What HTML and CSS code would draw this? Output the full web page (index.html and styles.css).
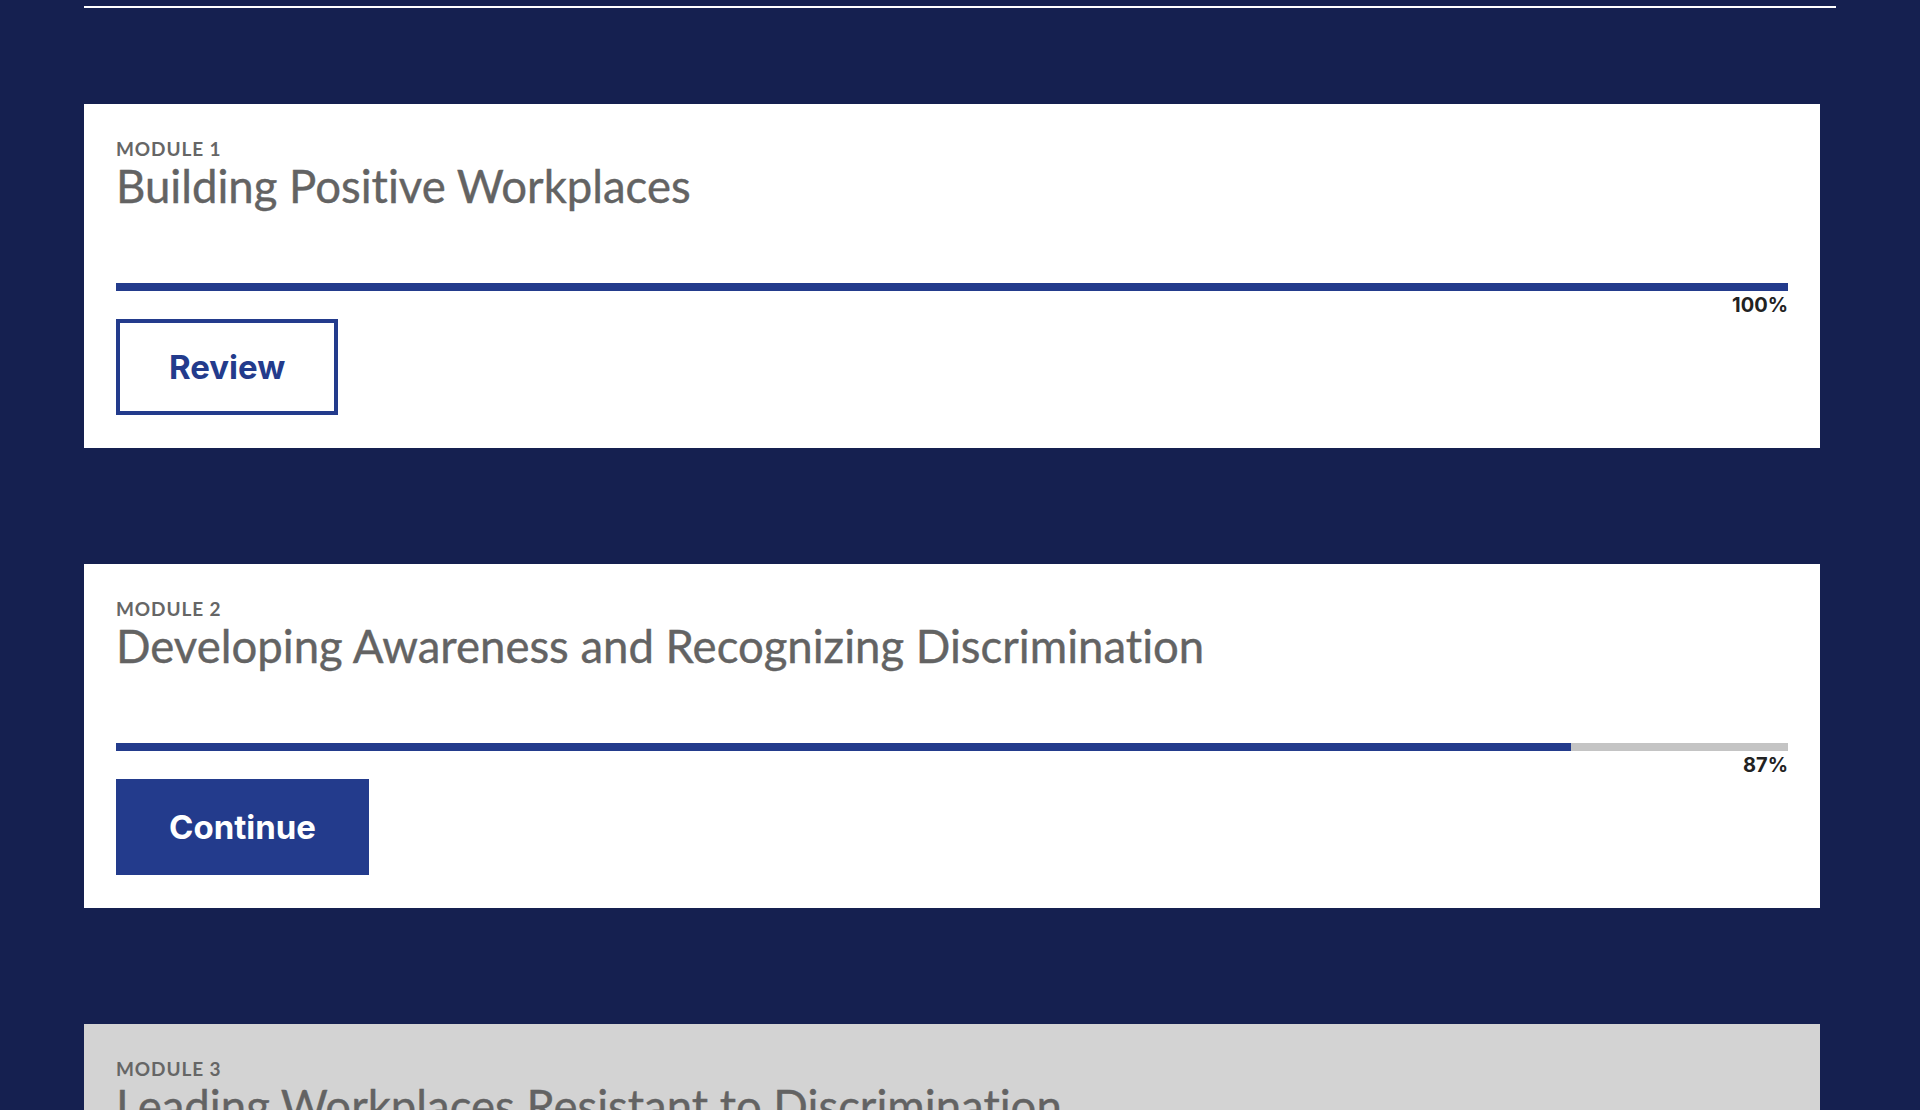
FILE: index.html
```html
<!DOCTYPE html>
<html lang="en">
<head>
<meta charset="utf-8">
<title>Modules</title>
<link rel="stylesheet" href="styles.css">
</head>
<body>
<div class="page">
  <div class="rule"></div>
  <div class="modules">
    <section class="card">
      <div class="label">MODULE 1</div>
      <h2 class="title">Building Positive Workplaces</h2>
      <div class="track"><div class="fill" style="width:100%"></div></div>
      <div class="pct">100%</div>
      <a class="btn btn-outline" href="#">Review</a>
    </section>
    <section class="card">
      <div class="label">MODULE 2</div>
      <h2 class="title">Developing Awareness and Recognizing Discrimination</h2>
      <div class="track"><div class="fill" style="width:87%"></div></div>
      <div class="pct">87%</div>
      <a class="btn btn-solid" href="#">Continue</a>
    </section>
    <section class="card card-locked">
      <div class="label">MODULE 3</div>
      <h2 class="title">Leading Workplaces Resistant to Discrimination</h2>
      <div class="track"><div class="fill" style="width:0%"></div></div>
      <div class="pct">0%</div>
      <a class="btn btn-solid" href="#">Start</a>
    </section>
  </div>
</div>
</body>
</html>
```

FILE: styles.css
```css
html {
  overflow: hidden;
}
body {
  margin: 0;
  background: #152050;
  font-family: "Lato", "Liberation Sans", sans-serif;
}
.page {
  padding: 6px 0 0 84px;
}
.rule {
  width: 1752px;
  height: 2px;
  background: #ffffff;
}
.modules {
  display: flex;
  flex-direction: column;
  gap: 116px;
  padding-top: 96px;
}
.card {
  width: 1736px;
  box-sizing: border-box;
  height: 344px;
  background: #ffffff;
  padding: 33px 32px 32px;
  display: flex;
  flex-direction: column;
  align-items: flex-start;
}
.card-locked {
  background: #d3d3d3;
}
.label {
  font-family: "Lato", sans-serif;
  font-weight: 700;
  font-size: 19px;
  line-height: 23px;
  letter-spacing: 0.9px;
  color: #666666;
}
.title {
  margin: 0;
  font-family: "Lato", sans-serif;
  font-weight: 400;
  font-size: 45.5px;
  line-height: 52px;
  color: #636363;
  font-variant-ligatures: none;
  -webkit-text-stroke: 0.4px #636363;
}
.track {
  margin-top: 71px;
  width: 100%;
  height: 8px;
  background: #c4c4c4;
}
.fill {
  height: 100%;
  background: #233b8c;
}
.pct {
  align-self: flex-end;
  font-family: "Inter", sans-serif;
  font-weight: 700;
  font-size: 20px;
  line-height: 24px;
  padding-top: 2px;
  color: #222222;
}
.btn {
  margin-top: 2px;
  box-sizing: border-box;
  height: 96px;
  display: flex;
  align-items: center;
  padding: 0 49px;
  border: 4px solid #233b8c;
  font-family: "Inter", sans-serif;
  font-weight: 700;
  font-size: 33px;
  text-decoration: none;
}
.btn-outline {
  background: #ffffff;
  color: #233b8c;
}
.btn-solid {
  background: #233b8c;
  color: #ffffff;
}
```
